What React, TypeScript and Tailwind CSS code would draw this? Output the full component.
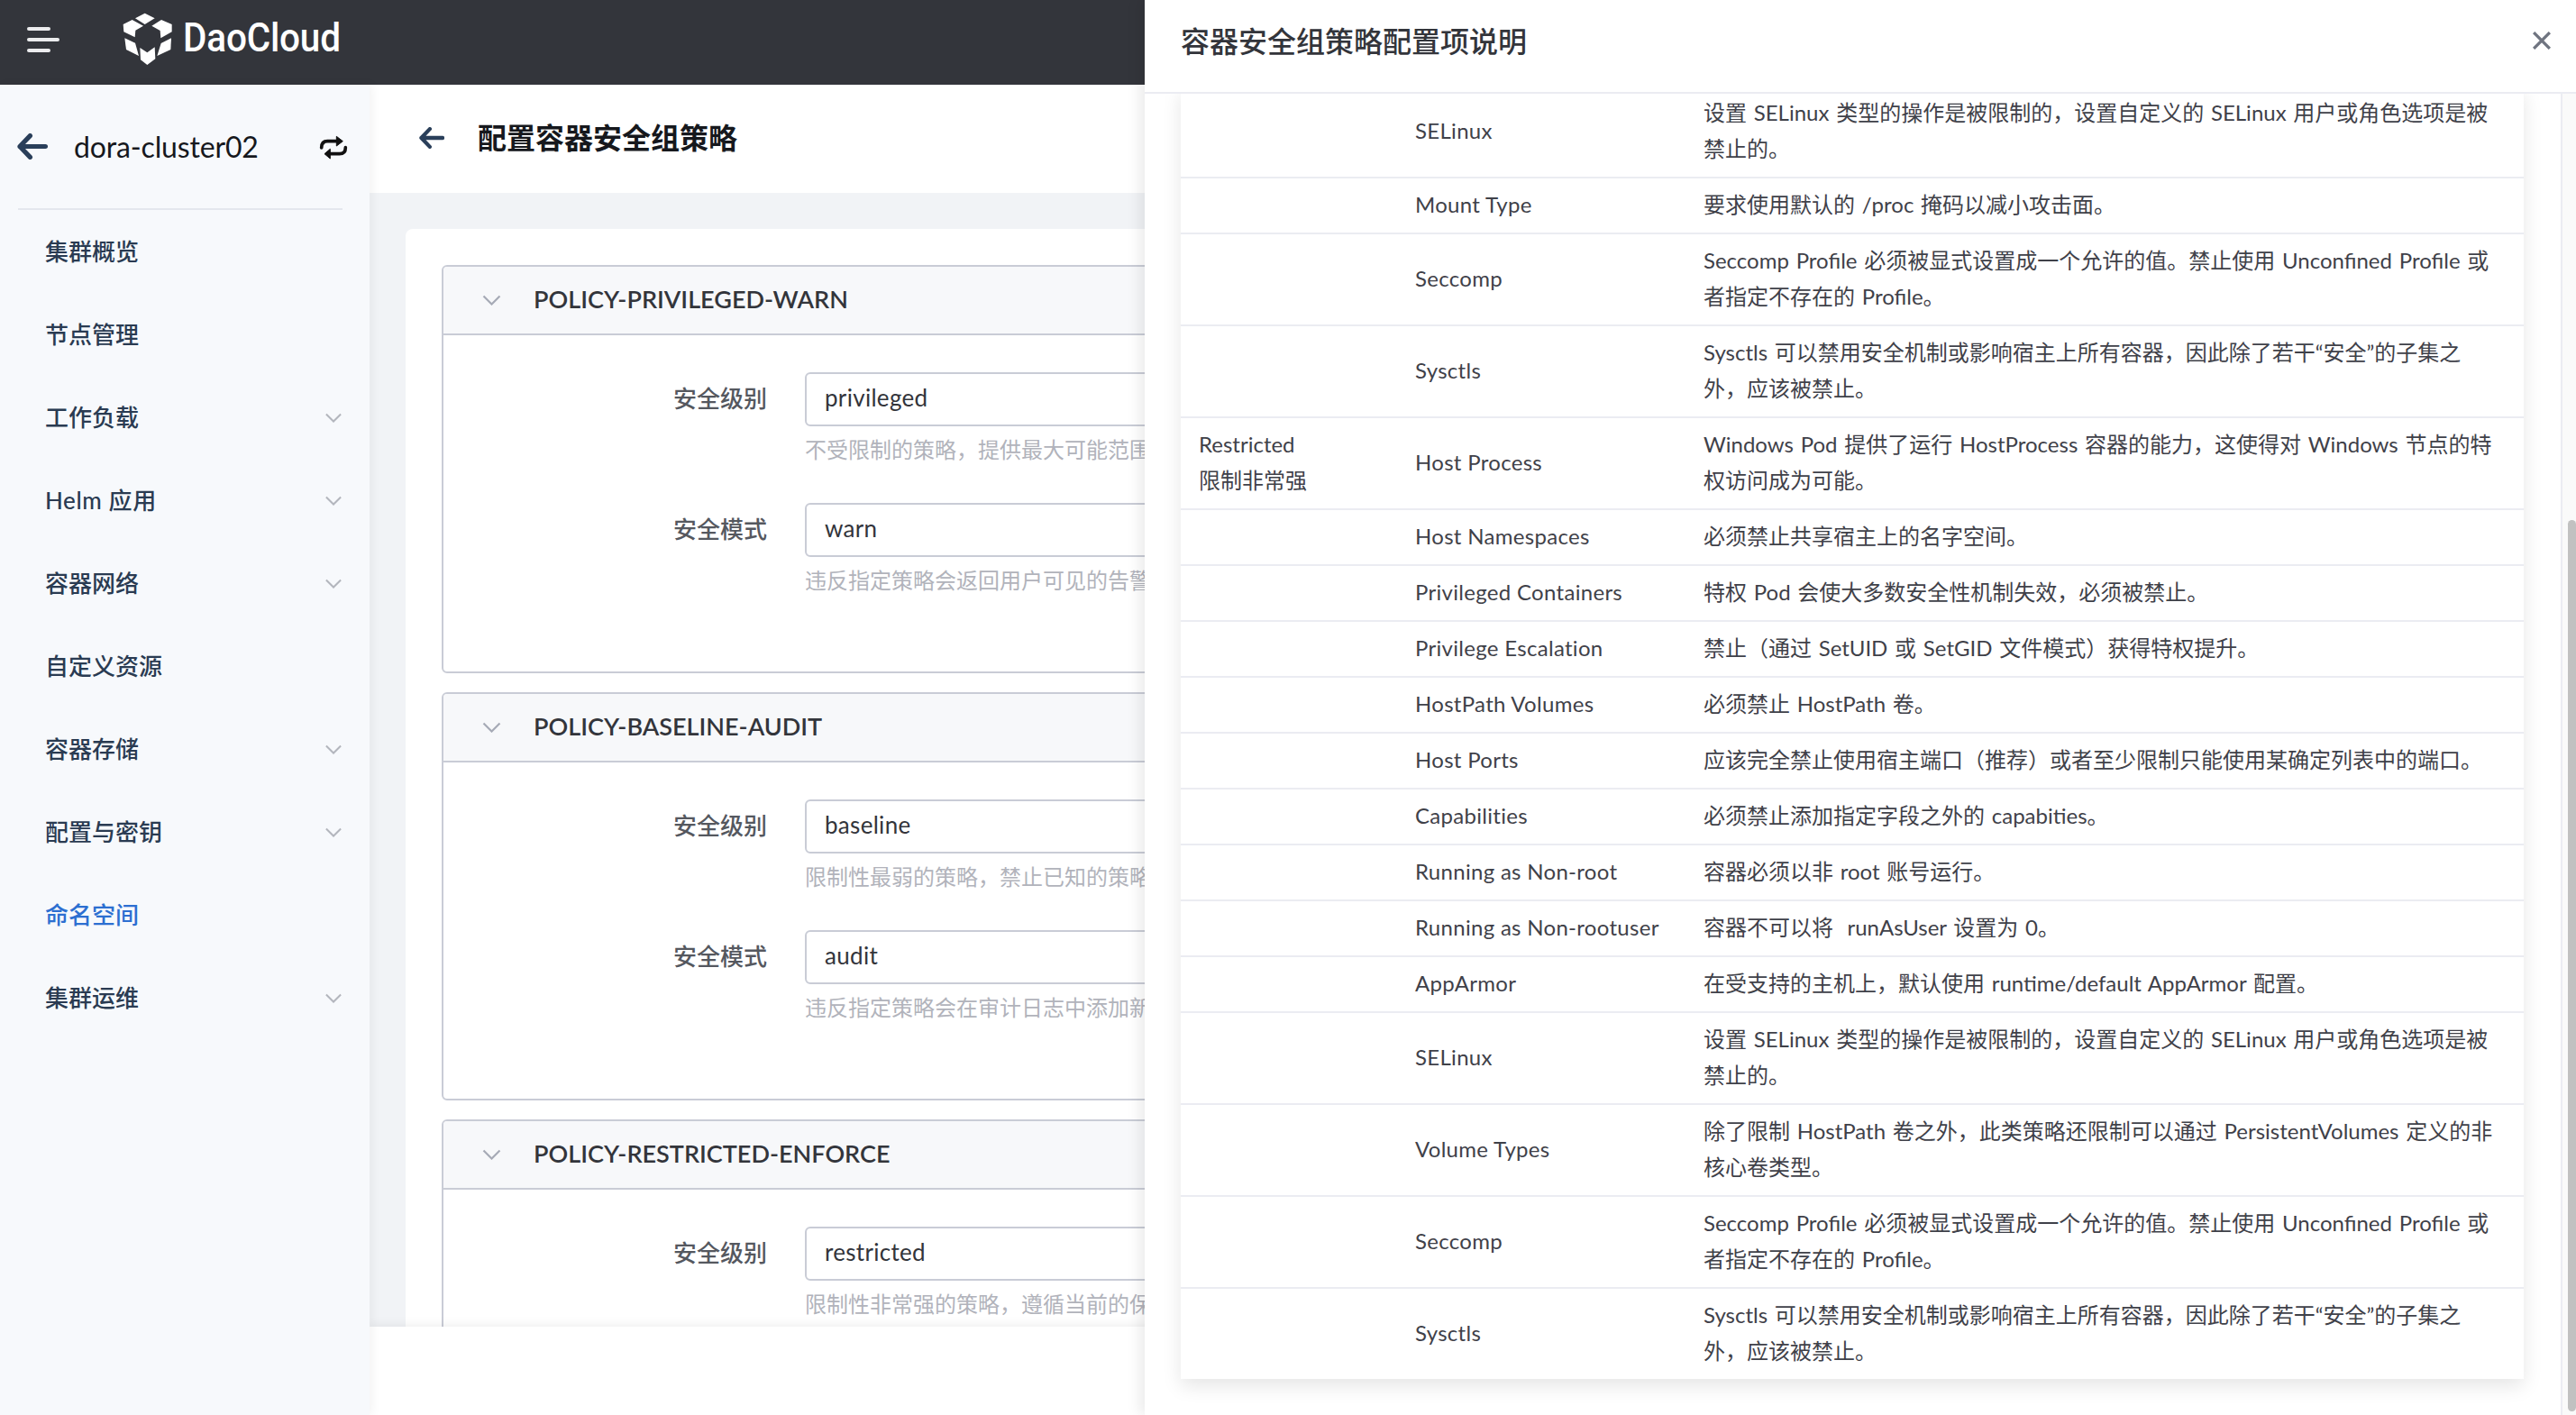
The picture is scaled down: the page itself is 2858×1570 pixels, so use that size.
const fontStack = "font-['Lato','Noto_Sans_CJK_SC',sans-serif]";

const navItems = [
  { label: "集群概览" },
  { label: "节点管理" },
  { label: "工作负载", arrow: true },
  { label: "Helm 应用", arrow: true },
  { label: "容器网络", arrow: true },
  { label: "自定义资源" },
  { label: "容器存储", arrow: true },
  { label: "配置与密钥", arrow: true },
  { label: "命名空间", active: true },
  { label: "集群运维", arrow: true },
];

const policies = [
  {
    name: "POLICY-PRIVILEGED-WARN",
    level: "privileged",
    levelHint: "不受限制的策略，提供最大可能范围的权限许可。此策略允许已知的特权提升。",
    mode: "warn",
    modeHint: "违反指定策略会返回用户可见的告警信息，但不会阻止创建。",
  },
  {
    name: "POLICY-BASELINE-AUDIT",
    level: "baseline",
    levelHint: "限制性最弱的策略，禁止已知的策略提升。允许使用默认的（规定最少）Pod 配置。",
    mode: "audit",
    modeHint: "违反指定策略会在审计日志中添加新的审计事件，但是仍允许创建。",
  },
  {
    name: "POLICY-RESTRICTED-ENFORCE",
    level: "restricted",
    levelHint: "限制性非常强的策略，遵循当前的保护 Pod 的最佳实践。",
    mode: "enforce",
    modeHint: "违反指定策略会导致 Pod 被拒绝。",
  },
];

const selinux = "设置 SELinux 类型的操作是被限制的，设置自定义的 SELinux 用户或角色选项是被\n禁止的。";
const seccomp = "Seccomp Profile 必须被显式设置成一个允许的值。禁止使用 Unconfined Profile 或\n者指定不存在的 Profile。";
const sysctls = "Sysctls 可以禁用安全机制或影响宿主上所有容器，因此除了若干“安全”的子集之\n外，应该被禁止。";

const rows = [
  ["", "SELinux", selinux],
  ["", "Mount Type", "要求使用默认的 /proc 掩码以减小攻击面。"],
  ["", "Seccomp", seccomp],
  ["", "Sysctls", sysctls],
  ["Restricted\n限制非常强", "Host Process", "Windows Pod 提供了运行 HostProcess 容器的能力，这使得对 Windows 节点的特\n权访问成为可能。"],
  ["", "Host Namespaces", "必须禁止共享宿主上的名字空间。"],
  ["", "Privileged Containers", "特权 Pod 会使大多数安全性机制失效，必须被禁止。"],
  ["", "Privilege Escalation", "禁止（通过 SetUID 或 SetGID 文件模式）获得特权提升。"],
  ["", "HostPath Volumes", "必须禁止 HostPath 卷。"],
  ["", "Host Ports", "应该完全禁止使用宿主端口（推荐）或者至少限制只能使用某确定列表中的端口。"],
  ["", "Capabilities", "必须禁止添加指定字段之外的 capabities。"],
  ["", "Running as Non-root", "容器必须以非 root 账号运行。"],
  ["", "Running as Non-rootuser", "容器不可以将\u00a0 runAsUser 设置为 0。"],
  ["", "AppArmor", "在受支持的主机上，默认使用 runtime/default AppArmor 配置。"],
  ["", "SELinux", selinux],
  ["", "Volume Types", "除了限制 HostPath 卷之外，此类策略还限制可以通过 PersistentVolumes 定义的非\n核心卷类型。"],
  ["", "Seccomp", seccomp],
  ["", "Sysctls", sysctls],
];

const Chevron = ({ className }: { className: string }) => (
  <svg viewBox="0 0 20 12" fill="none" stroke="currentColor" strokeWidth="2.2" className={className}>
    <path d="M1 1.5 L10 10.5 L19 1.5" />
  </svg>
);

const BackArrow = ({ className }: { className: string }) => (
  <svg viewBox="0 0 32 28" fill="none" stroke="currentColor" strokeWidth="5" strokeLinecap="round" strokeLinejoin="round" className={className}>
    <path d="M13.5 2.5 L2.5 14 L13.5 25.5 M2.5 14 H30" />
  </svg>
);

const Logo = () => (
  <svg viewBox="0 0 210 210" fill="#fff" className="w-[70px] h-[70px] shrink-0 mb-[8px]">
    <polygon points="60,37 92,20 125,37 92,57" />
    <polygon points="20,57 50,42 87,62 61,77 59,100 22,82" />
    <polygon points="115,62 147,42 182,57 182,82 145,103 143,78" />
    <polygon points="25,103 60,119 72,162 30,141" />
    <polygon points="180,103 146,120 133,162 178,141" />
    <polygon points="76,135 100,151 125,133 127,172 100,192 78,175" />
  </svg>
);

const TopBar = () => (
  <div className="h-[94px] shrink-0 bg-[#33353b] flex items-center">
    <svg viewBox="0 0 36 28" className="w-[36px] h-[28px] ml-[30px] mr-[64px] mb-[6px]" fill="#ececee">
      <rect x="0" y="0" width="26" height="4" rx="2" />
      <rect x="0" y="12" width="36" height="4" rx="2" />
      <rect x="0" y="24" width="26" height="4" rx="2" />
    </svg>
    <Logo />
    <span className="ml-[3px] mb-[11px] text-[44px] leading-none font-medium text-white font-['Roboto',sans-serif] tracking-[-0.2px] scale-x-[0.92] origin-left">
      DaoCloud
    </span>
  </div>
);

const Sidebar = () => (
  <aside className="w-[410px] shrink-0 bg-[#f7f9fc] relative z-10 shadow-[3px_0_10px_rgba(0,0,0,0.05)]">
    <div className="h-[137px] flex items-center pl-[19px]">
      <BackArrow className="w-[34px] h-[29px] text-[#2a3f5a]" />
      <span className="ml-[29px] text-[32px] text-[#16181d] tracking-[-0.15px]">dora-cluster02</span>
      <svg viewBox="0 0 180 180" className="w-[60px] h-[60px] ml-auto mr-[10px] -mt-[6px]">
        <path d="M50 102 C50 88 56 80 70 80 H105" fill="none" stroke="#111" strokeWidth="11" strokeLinecap="round" />
        <path d="M100 64 L121 80 L100 96 Z" fill="#111" stroke="#111" strokeWidth="3" strokeLinejoin="round" />
        <path d="M130 101 C130 115 124 122 110 122 H75" fill="none" stroke="#111" strokeWidth="11" strokeLinecap="round" />
        <path d="M79 106 L60 122 L79 138 Z" fill="#111" stroke="#111" strokeWidth="3" strokeLinejoin="round" />
      </svg>
    </div>
    <div className="mx-[20px] w-[360px] h-[2px] bg-[#e4e7ee]" />
    {navItems.map((item) => (
      <div key={item.label} className="h-[92px] flex items-center pl-[50px] pr-[31px]">
        <span className={`text-[26px] font-medium ${item.active ? "text-[#2c6fd1]" : "text-[#2a3b52]"} ${item.label === "Helm 应用" ? "tracking-[0.6px]" : ""}`}>
          {item.label}
        </span>
        {item.arrow && <Chevron className="w-[18px] h-[11px] ml-auto text-[#b3b6bd]" />}
      </div>
    ))}
  </aside>
);

const PolicyField = ({ label, value, hint }: { label: string; value: string; hint: string }) => (
  <div className="flex mb-[41px]">
    <div className="w-[359px] shrink-0 h-[60px] flex items-center justify-end pb-[2px] text-[26px] font-medium text-[#55585f]">{label}</div>
    <div className="ml-[42px] flex-1">
      <div className="h-[60px] border-2 border-[#c9ccd6] rounded-[6px] flex items-center pl-[20px] pb-[3px] text-[26px] tracking-[0.3px] text-[#33353b]">{value}</div>
      <div className="mt-[8px] h-[36px] leading-[36px] text-[24px] text-[#b1b3bb] whitespace-nowrap">{hint}</div>
    </div>
  </div>
);

const PolicyCard = ({ policy }: { policy: (typeof policies)[number] }) => (
  <div className="h-[453px] mb-[21px] border-2 border-[#c9ccd6] rounded-[6px] shrink-0 overflow-hidden">
    <div className="h-[76px] bg-[#f7f8fa] border-b-2 border-[#c9ccd6] flex items-center pl-[43px]">
      <Chevron className="w-[21px] h-[12px] text-[#a6aab6]" />
      <span className="ml-[36px] pb-[2px] text-[27px] font-semibold text-[#33353b]">{policy.name}</span>
    </div>
    <div className="pt-[41px] pr-[40px]">
      <PolicyField label="安全级别" value={policy.level} hint={policy.levelHint} />
      <PolicyField label="安全模式" value={policy.mode} hint={policy.modeHint} />
    </div>
  </div>
);

const MainArea = () => (
  <main className="flex-1 flex flex-col min-w-0">
    <div className="h-[120px] shrink-0 bg-white flex items-center pl-[55px]">
      <BackArrow className="w-[28px] h-[24px] text-[#2a3f5a] -mt-[2px]" />
      <h1 className="ml-[37px] text-[32px] font-bold text-[#16181d] -mt-[2px]">配置容器安全组策略</h1>
    </div>
    <div className="flex-1 min-h-0 bg-[#f1f3f6] pl-[40px] pt-[40px] overflow-hidden">
      <div className="w-[2368px] bg-white rounded-t-[8px] px-[40px] pt-[40px] flex flex-col">
        {policies.map((p) => (
          <PolicyCard key={p.name} policy={p} />
        ))}
      </div>
    </div>
    <div className="h-[98px] shrink-0 bg-white relative shadow-[0_-3px_10px_rgba(0,0,0,0.06)]" />
  </main>
);

const Drawer = () => (
  <div className="absolute right-0 top-0 bottom-0 w-[1588px] z-20 bg-white flex flex-col shadow-[-6px_0_14px_rgba(0,0,0,0.08)]">
    <div className="h-[104px] shrink-0 border-b-2 border-[#ebecf2] flex items-center justify-between pl-[40px] pr-[28px] pb-[12px]">
      <h2 className="text-[32px] font-medium text-[#33353b] mt-[2px]">容器安全组策略配置项说明</h2>
      <svg viewBox="0 0 18 18" className="w-[20px] h-[20px] text-[#6f7480]" fill="none" stroke="currentColor" strokeWidth="3">
        <path d="M1 1 L17 17 M17 1 L1 17" />
      </svg>
    </div>
    <div className="flex-1 min-h-0 flex overflow-hidden">
      <div className="flex-1 min-w-0 pl-[40px] -mt-[8px]">
        <table className="w-[1490px] table-fixed text-[24px] leading-[40px] text-[#3f4149] shadow-[0_8px_20px_rgba(0,0,0,0.1)]">
          <colgroup>
            <col className="w-[240px]" />
            <col className="w-[320px]" />
            <col />
          </colgroup>
          <tbody>
            {rows.map((row, i) => (
              <tr key={i} className="border-b-2 border-[#ebecf2] last:border-b-0">
                <td className="pl-[20px] pt-[9px] pb-[11px] whitespace-pre-line align-middle">{row[0]}</td>
                <td className="pl-[20px] pt-[9px] pb-[11px] align-middle tracking-[0.3px]">{row[1]}</td>
                <td className="pl-[20px] pr-[10px] pt-[9px] pb-[11px] whitespace-pre-line align-middle [word-spacing:1.6px]">{row[2]}</td>
              </tr>
            ))}
          </tbody>
        </table>
      </div>
      <div className="w-[17px] shrink-0 border-l-2 border-[#ebecf2] bg-[#fafafa] relative">
        <div className="absolute left-[6px] right-0 top-[473px] bottom-[4px] rounded-[6px] bg-[#c1c1c1]" />
      </div>
    </div>
  </div>
);

export default function App() {
  return (
    <div className={`relative h-screen overflow-hidden flex flex-col bg-white ${fontStack}`}>
      <TopBar />
      <div className="flex-1 min-h-0 flex">
        <Sidebar />
        <MainArea />
      </div>
      <Drawer />
    </div>
  );
}
